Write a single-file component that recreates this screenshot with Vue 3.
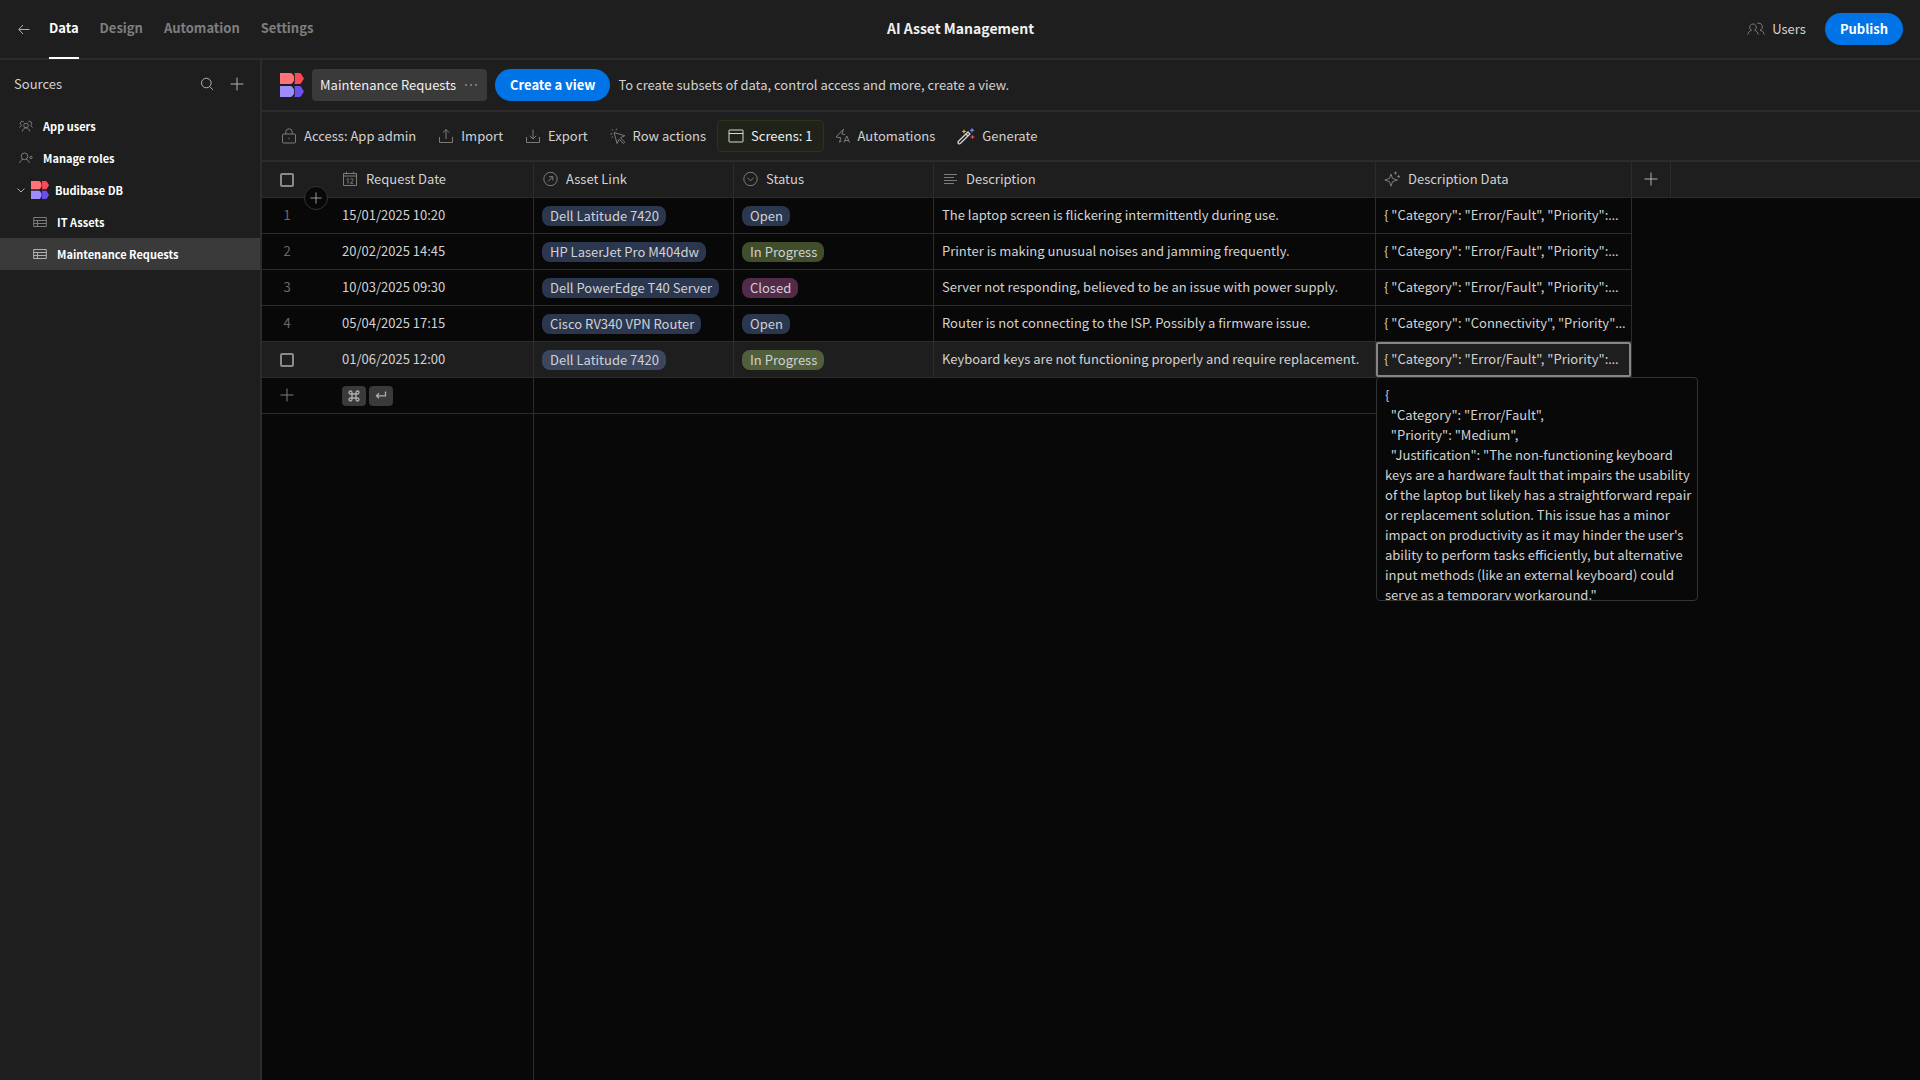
<script setup>
import { ref } from 'vue'

const tabs = ['Data', 'Design', 'Automation', 'Settings']

const rows = [
  { date: '15/01/2025 10:20', asset: 'Dell Latitude 7420', status: 'Open', tone: 'blue', text: 'The laptop screen is flickering intermittently during use.', data: '{ "Category": "Error/Fault", "Priority":' },
  { date: '20/02/2025 14:45', asset: 'HP LaserJet Pro M404dw', status: 'In Progress', tone: 'green', text: 'Printer is making unusual noises and jamming frequently.', data: '{ "Category": "Error/Fault", "Priority":' },
  { date: '10/03/2025 09:30', asset: 'Dell PowerEdge T40 Server', status: 'Closed', tone: 'purple', text: 'Server not responding, believed to be an issue with power supply.', data: '{ "Category": "Error/Fault", "Priority":' },
  { date: '05/04/2025 17:15', asset: 'Cisco RV340 VPN Router', status: 'Open', tone: 'blue', text: 'Router is not connecting to the ISP. Possibly a firmware issue.', data: '{ "Category": "Connectivity", "Priority"' },
  { date: '01/06/2025 12:00', asset: 'Dell Latitude 7420', status: 'In Progress', tone: 'green', text: 'Keyboard keys are not functioning properly and require replacement.', data: '{ "Category": "Error/Fault", "Priority":', active: true },
]

const detail = `{
  "Category": "Error/Fault",
  "Priority": "Medium",
  "Justification": "The non-functioning keyboard keys are a hardware fault that impairs the usability of the laptop but likely has a straightforward repair or replacement solution. This issue has a minor impact on productivity as it may hinder the user's ability to perform tasks efficiently, but alternative input methods (like an external keyboard) could serve as a temporary workaround."`

const allRows = ref(false)
const lastRow = ref(false)
</script>

<template>
  <div class="app">
    <svg class="defs" aria-hidden="true">
      <symbol id="logo" viewBox="0 0 24 24">
        <path fill="#ff7277" d="M0 0h10.600q1 0 1.600.8l1.800 2.400v4.600l-1.800 2.400q-.6.800-1.600.8H0z" />
        <path fill="#fd4855" d="M14.200 0h5.300q1 0 1.600.8L24 5.500l-2.900 4.700q-.6.800-1.600.8h-5.300l.6-1V1z" />
        <path fill="#9e8cfc" d="M0 13h10.600q1 0 1.600.8l1.800 2.400v4.600l-1.800 2.400q-.6.800-1.600.8H0z" />
        <path fill="#6b50ee" d="M14.200 13h5.300q1 0 1.600.8l2.900 4.700-2.900 4.700q-.6.800-1.600.8h-5.300l.6-1V14z" />
      </symbol>
      <symbol id="plus" viewBox="0 0 14 14"><path d="M7 .5v13M.5 7h13" /></symbol>
      <symbol id="table" viewBox="0 0 14 12"><path d="M.7 1.500h12.600v9H.7zM.7 4.500h12.600M.7 7.500h12.600M4.500 4.500v6" /></symbol>
    </svg>

    <header class="top">
      <div class="top-left">
        <button class="bare back" aria-label="Back">
          <svg class="line" width="12" height="12" viewBox="0 0 12 12"><path d="M11.500 6.500H1M5 2L.8 6.500 5 11" /></svg>
        </button>
        <nav class="tabs">
          <a v-for="(t, i) in tabs" :key="t" href="#" :class="{ on: i === 0 }">{{ t }}</a>
        </nav>
      </div>
      <h1>AI Asset Management</h1>
      <div class="top-right">
        <button class="bare users">
          <svg class="line dim" width="18" height="14" viewBox="0 0 18 14"><path d="M4.500 8.200a3.300 3.300 0 1 1 3 0M.8 12.500c.3-2.500 2-3.700 3.700-4.300M7.500 8.200c1.700.6 3.400 1.800 3.700 4.300M10.300 1.500a3.300 3.300 0 1 1 2.700 6.700c2.200.5 3.900 1.900 4.200 4.300" /></svg>
          Users
        </button>
        <button class="cta">Publish</button>
      </div>
    </header>

    <div class="body">
      <aside class="side">
        <div class="side-head">
          <h2>Sources</h2>
          <button class="bare" aria-label="Search">
            <svg class="line" width="14" height="14" viewBox="0 0 14 14"><circle cx="6.300" cy="6" r="4.800" /><path d="M9.800 9.500l3 3.300" /></svg>
          </button>
          <button class="bare" aria-label="Add source">
            <svg class="line" width="14" height="14"><use href="#plus" /></svg>
          </button>
        </div>
        <nav class="tree">
          <a href="#" class="root">
            <svg class="line dim" width="14" height="12" viewBox="0 0 14 12"><circle cx="7" cy="5.500" r="2.300" /><path d="M3.300 11.500c.4-2.300 2-3.600 3.700-3.600s3.300 1.300 3.700 3.600M4.800 2a2 2 0 1 0-2.200 3.200L.5 7.500M9.200 2a2 2 0 1 1 2.200 3.200l2.100 2.300" /></svg>
            App users
          </a>
          <a href="#" class="root">
            <svg class="line dim" width="14" height="12" viewBox="0 0 14 12"><circle cx="5.500" cy="4.300" r="3.300" /><path d="M.6 11c.4-2.300 2-3.200 3.400-3.600M7 7.400c1.500.4 3 1.300 3.400 3.600" /><circle cx="12" cy="5.500" r="1.200" /></svg>
            Manage roles
          </a>
          <a href="#" class="db">
            <svg class="line" width="8" height="8" viewBox="0 0 8 8"><path d="M.5 2.500L4 6l3.500-3.500" /></svg>
            <svg width="18" height="18"><use href="#logo" /></svg>
            Budibase DB
          </a>
          <a href="#" class="leaf"><svg class="line dim" width="14" height="12"><use href="#table" /></svg>IT Assets</a>
          <a href="#" class="leaf on"><svg class="line" width="14" height="12"><use href="#table" /></svg>Maintenance Requests</a>
        </nav>
      </aside>

      <main class="main">
        <div class="view-bar">
          <svg width="24" height="24"><use href="#logo" /></svg>
          <button class="view-tab">
            Maintenance Requests
            <svg width="14" height="4" viewBox="0 0 14 4" fill="#8e8e8e"><circle cx="2" cy="2" r="1" /><circle cx="7" cy="2" r="1" /><circle cx="12" cy="2" r="1" /></svg>
          </button>
          <button class="cta">Create a view</button>
          <p>To create subsets of data, control access and more, create a view.</p>
        </div>

        <div class="tool-bar">
          <button class="tool">
            <svg class="line dim" width="16" height="16" viewBox="0 0 16 16"><rect x="1.500" y="6" width="13" height="9" rx="1" /><path d="M4.800 6V4a3.200 3.200 0 0 1 6.400 0v2M8 9.700v1.600" /></svg>
            Access: App admin
          </button>
          <button class="tool">
            <svg class="line dim" width="16" height="16" viewBox="0 0 16 16"><path d="M1.500 9v5.500h13V9M8 11V1.500M4.800 4.700L8 1.500l3.200 3.200" /></svg>
            Import
          </button>
          <button class="tool">
            <svg class="line dim" width="16" height="16" viewBox="0 0 16 16"><path d="M1.500 9v5.500h13V9M8 1.500V11M4.800 7.800L8 11l3.200-3.200" /></svg>
            Export
          </button>
          <button class="tool">
            <svg class="line dim" width="16" height="16" viewBox="0 0 16 16"><path d="M4 4.500l10.800 3.200-4.300 2.200 4.300 4.200-1.500 1.400-4.200-4.300-2 4.300zM3 2.600L1.800 1.200M6 2.300L6.800.6M2.300 6H.3M3 8.500l-1.500 1" /></svg>
            Row actions
          </button>
          <button class="tool screens">
            <svg class="line" width="16" height="16" viewBox="0 0 16 16"><rect x="1" y="2" width="14" height="12" rx=".5" /><path d="M1 5.500h14" /></svg>
            Screens: 1
          </button>
          <button class="tool">
            <svg class="line dim" width="16" height="16" viewBox="0 0 16 16"><path d="M6.500 13l-2 1.300 1.300-4.500L1 9l7.500-7.800L6.800 6l3.200.5M9 14.500l2.800-6.500 2.800 6.500M10 12.500h3.700" /></svg>
            Automations
          </button>
          <button class="tool">
            <svg width="18" height="18" viewBox="0 0 18 18" fill="none"><path d="M1.500 16.500c-.9-.9-.5-1.700 0-2.200L11 5l2 2-9.500 9.300c-.6.600-1.400.8-2 .2zM9 7l2 2" stroke="#d2d2d2" stroke-width="1.300" /><path d="M7 2l.7 1.800 1.800.7-1.800.7L7 7l-.7-1.800-1.800-.7 1.800-.7z" fill="#d8b23c" /><path d="M15 .5l.8 2 2 .8-2 .8-.8 2-.8-2-2-.8 2-.8z" fill="#7c86f2" /><path d="M15.500 7.500l.7 1.800 1.800.7-1.800.7-.7 1.800-.7-1.800L13 10l1.800-.7z" fill="#e0523f" /></svg>
            Generate
          </button>
        </div>

        <div class="grid">
          <table>
            <colgroup>
              <col class="c-gutter" /><col class="c-mid" /><col class="c-mid" /><col class="c-mid" /><col class="c-text" /><col class="c-data" /><col class="c-add" /><col />
            </colgroup>
            <thead>
              <tr>
                <th class="gutter">
                  <div class="slot"><input v-model="allRows" type="checkbox" aria-label="Select all rows" /></div>
                  <button class="insert" aria-label="Add row"><svg class="line" width="12" height="12"><use href="#plus" /></svg></button>
                </th>
                <th>
                  <div class="head">
                    <svg class="line dim" width="16" height="16" viewBox="0 0 16 16"><path d="M1.500 2.500h13v12h-13zM1.500 5h13M4.500.8v2.400M11.500.8v2.400" /><path d="M4.800 8.300l1.200-.8v5M8.500 8.500c.3-1.300 2.700-1.200 2.500.3-.2 1.200-1.600 2-2.500 3.500h2.700" /></svg>
                    Request Date
                  </div>
                </th>
                <th>
                  <div class="head">
                    <svg class="line dim" width="16" height="16" viewBox="0 0 16 16"><circle cx="8.500" cy="8" r="6.700" /><path d="M6 10.500l4.600-4.600M7 5.700h3.800v3.800" /></svg>
                    Asset Link
                  </div>
                </th>
                <th>
                  <div class="head">
                    <svg class="line dim" width="16" height="16" viewBox="0 0 16 16"><circle cx="8.500" cy="8" r="6.700" /><path d="M5.500 6.800l3 3 3-3" /></svg>
                    Status
                  </div>
                </th>
                <th>
                  <div class="head">
                    <svg class="line dim" width="16" height="16" viewBox="0 0 16 16"><path d="M2 3.500h13M2 6.500h10M2 9.500h13M2 12.500h10" /></svg>
                    Description
                  </div>
                </th>
                <th>
                  <div class="head">
                    <svg class="line dim" width="16" height="16" viewBox="0 0 16 16"><path d="M7 3l1.500 4.500L13.500 9 8.500 10.700 7 15.300 5.500 10.700.8 9l4.700-1.500zM11.500.5v3M10 2h3M14.700 4v3M13.200 5.500h2.800" /></svg>
                    Description Data
                  </div>
                </th>
                <th><button class="bare add-col" aria-label="Add column"><svg class="line" width="14" height="14"><use href="#plus" /></svg></button></th>
                <th class="rest"></th>
              </tr>
            </thead>
            <tbody>
              <tr v-for="(r, i) in rows" :key="i" :class="{ active: r.active }">
                <td class="gutter">
                  <div class="slot">
                    <input v-if="r.active" v-model="lastRow" type="checkbox" aria-label="Select row 5" />
                    <template v-else>{{ i + 1 }}</template>
                  </div>
                </td>
                <td>{{ r.date }}</td>
                <td class="tags"><span class="pill blue">{{ r.asset }}</span></td>
                <td class="tags"><span class="pill" :class="r.tone">{{ r.status }}</span></td>
                <td>{{ r.text }}</td>
                <td class="data">
                  {{ r.data }}<span class="more">…</span>
                  <div v-if="r.active" class="popup">{{ detail }}</div>
                </td>
                <td class="none" colspan="2"></td>
              </tr>
              <tr>
                <td class="gutter">
                  <button class="bare slot" aria-label="New row"><svg class="line dim" width="14" height="14"><use href="#plus" /></svg></button>
                </td>
                <td class="tags">
                  <div class="keys">
                    <kbd><svg class="line" width="12" height="12" viewBox="0 0 12 12"><path stroke-width="1.300" d="M4 4H2.500A1.500 1.500 0 1 1 4 2.500v7A1.500 1.500 0 1 1 2.500 8h7A1.500 1.500 0 1 1 8 9.500v-7A1.500 1.500 0 1 1 9.500 4z" /></svg></kbd>
                    <kbd><svg class="line" width="12" height="12" viewBox="0 0 12 12"><path stroke-width="1.300" d="M10.500 1.500v4.300H1.500M4 3.300L1.500 5.800 4 8.300" /></svg></kbd>
                  </div>
                </td>
                <td class="blank" colspan="4"></td>
                <td class="none" colspan="2"></td>
              </tr>
            </tbody>
          </table>
          <div class="sticky-edge"></div>
        </div>
      </main>
    </div>
  </div>
</template>

<style>
body {
  background: #080808;
}
</style>

<style scoped>
.app {
  --panel: #1e1e1e;
  --line: #2c2c2c;
  display: flex;
  flex-direction: column;
  min-height: 100vh;
  color: #d2d2d2;
  background: #080808;
  font: 400 13px/20px "Noto Sans CJK SC", "Noto Sans", sans-serif;
}
.app *,
.app *::before {
  box-sizing: border-box;
}
.defs {
  position: absolute;
  width: 0;
  height: 0;
}
svg {
  flex: none;
}
.line {
  fill: none;
  stroke: #b0b0b0;
}
.dim {
  stroke: #7c7c7c;
}
button {
  font: inherit;
  color: inherit;
  border: 0;
  background: none;
  padding: 0;
  white-space: nowrap;
}
a {
  color: inherit;
  text-decoration: none;
}
h1,
h2,
p {
  margin: 0;
}
.bare {
  display: flex;
  align-items: center;
  justify-content: center;
}
.cta {
  height: 32px;
  padding: 0 15px;
  border-radius: 16px;
  background: #0073e6;
  color: #fff;
  font-weight: 700;
}

.top {
  display: flex;
  height: 60px;
  align-items: center;
  padding: 0 17px 0 18px;
  background: var(--panel);
  border-bottom: 2px solid var(--line);
}
.top-left,
.top-right {
  display: flex;
  flex: 1;
  align-items: center;
}
.top-right {
  justify-content: flex-end;
  gap: 19px;
}
.top-left {
  gap: 19px;
}
.tabs {
  display: flex;
  gap: 21px;
  font-weight: 700;
  color: #7e7e7e;
}
.tabs a {
  height: 60px;
  line-height: 58px;
  border-bottom: 2px solid transparent;
}
.tabs .on {
  color: #fff;
  border-bottom-color: #fff;
}
h1 {
  padding-bottom: 2px;
  font-size: 14px;
  font-weight: 700;
  color: #f0f0f0;
}
.users {
  gap: 7px;
}

.body {
  display: flex;
  flex: 1;
}
.side {
  flex: none;
  width: 262px;
  background: var(--panel);
  border-right: 2px solid var(--line);
}
.side-head {
  display: flex;
  align-items: center;
  gap: 16px;
  height: 50px;
  padding: 0 16px 2px 14px;
}
h2 {
  flex: 1;
  font-size: 13px;
  font-weight: 400;
}
.tree a {
  display: flex;
  align-items: center;
  height: 32px;
  font-size: 11px;
  font-weight: 700;
  color: #fff;
}
.tree .root {
  padding-left: 19px;
  gap: 10px;
}
.tree .db {
  padding-left: 17px;
  gap: 6px;
}
.tree .leaf {
  padding-left: 33px;
  gap: 10px;
}
.tree .on {
  background: #3a3a3a;
}

.main {
  display: flex;
  flex: 1;
  min-width: 0;
  flex-direction: column;
}
.view-bar,
.tool-bar {
  display: flex;
  align-items: center;
  background: var(--panel);
  border-bottom: 2px solid var(--line);
}
.view-bar {
  height: 52px;
  gap: 8px;
  padding-left: 18px;
}
.view-tab {
  display: flex;
  align-items: center;
  gap: 8px;
  height: 32px;
  padding: 0 9px 0 8px;
  border-radius: 4px;
  background: #3a3a3a;
  color: #f0f0f0;
}
.tool-bar {
  height: 50px;
  padding: 0 0 0 8px;
}
.tool {
  display: flex;
  align-items: center;
  gap: 7px;
  height: 32px;
  padding: 0 10px 1px;
  border: 1px solid transparent;
  border-radius: 4px;
}
.screens {
  color: #f0f0f0;
  background: #20231a;
  border-color: #2b3318;
}
.screens .line {
  stroke: #d8d8d8;
}

.grid {
  display: flex;
  flex: 1;
  flex-direction: column;
}
table {
  width: 100%;
  table-layout: fixed;
  border-collapse: separate;
  border-spacing: 0;
}
.c-gutter {
  width: 72px;
}
.c-mid {
  width: 200px;
}
.c-text {
  width: 442px;
}
.c-data {
  width: 256px;
}
.c-add {
  width: 39px;
}
th,
td {
  height: 36px;
  padding: 0 0 2px 8px;
  text-align: left;
  font-weight: 400;
  white-space: nowrap;
  border-right: 1px solid var(--line);
  border-bottom: 1px solid var(--line);
}
.tags {
  padding-bottom: 0;
}
th {
  background: var(--panel);
}
.head {
  display: flex;
  align-items: center;
  gap: 8px;
}
.gutter {
  position: relative;
  padding-left: 0;
  border-right: 0;
  color: #6a6a6a;
}
th.gutter,
.active .gutter {
  padding-bottom: 0;
}
.slot {
  display: flex;
  justify-content: center;
  width: 50px;
}
th.rest {
  border-right: 0;
}
.none {
  border: 0;
}
.blank {
  border-right: 0;
}
.add-col {
  width: 22px;
}
input {
  appearance: none;
  width: 14px;
  height: 14px;
  margin: 0;
  border: 2px solid #8a8a8a;
  border-radius: 2px;
}
.insert {
  position: absolute;
  right: 6px;
  bottom: -13px;
  display: flex;
  align-items: center;
  justify-content: center;
  width: 24px;
  height: 24px;
  border: 1px solid #333;
  border-radius: 12px;
  background: #080808;
}
.active td:not(.none) {
  background: var(--panel);
}
.pill {
  display: inline-block;
  padding: 0 7px 0 8px;
  border-radius: 8px;
  vertical-align: middle;
}
.blue {
  background: #2b364f;
}
.green {
  background: #404e2c;
}
.purple {
  background: #532b48;
}
.active .blue {
  background: #3c475f;
}
.active .green {
  background: #515f3d;
}
.data {
  position: relative;
}
.more {
  font-family: "Noto Sans", sans-serif;
}
.active .data::before {
  content: "";
  position: absolute;
  inset: 0;
  border: 2px solid #868686;
  border-radius: 2px;
}
.popup {
  position: absolute;
  z-index: 1;
  top: 35px;
  left: 0;
  width: 322px;
  height: 224px;
  padding: 7px 2px 0 8px;
  overflow: hidden;
  white-space: pre-wrap;
  background: #080808;
  border: 1px solid #333;
  border-radius: 4px;
}
.keys {
  display: flex;
  gap: 3px;
}
kbd {
  display: flex;
  align-items: center;
  justify-content: center;
  width: 24px;
  height: 20px;
  border-radius: 4px;
  background: #3a3a3a;
}
.sticky-edge {
  flex: 1;
  width: 272px;
  border-right: 1px solid var(--line);
}
</style>
